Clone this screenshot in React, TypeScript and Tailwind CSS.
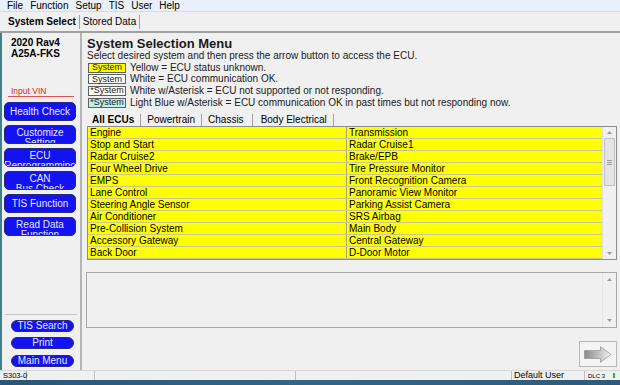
import React from 'react';

const rows: [string, string][] = [
  ['Engine', 'Transmission'],
  ['Stop and Start', 'Radar Cruise1'],
  ['Radar Cruise2', 'Brake/EPB'],
  ['Four Wheel Drive', 'Tire Pressure Monitor'],
  ['EMPS', 'Front Recognition Camera'],
  ['Lane Control', 'Panoramic View Monitor'],
  ['Steering Angle Sensor', 'Parking Assist Camera'],
  ['Air Conditioner', 'SRS Airbag'],
  ['Pre-Collision System', 'Main Body'],
  ['Accessory Gateway', 'Central Gateway'],
  ['Back Door', 'D-Door Motor'],
];

const legend = [
  { label: 'System', bg: 'bg-[#ffff00]', text: 'Yellow = ECU status unknown.' },
  { label: 'System', bg: 'bg-white', text: 'White = ECU communication OK.' },
  { label: '*System', bg: 'bg-white', text: 'White w/Asterisk = ECU not supported or not responding.' },
  {
    label: '*System',
    bg: 'bg-[#b8f2f2]',
    text: 'Light Blue w/Asterisk = ECU communication OK in past times but not responding now.',
  },
];

const sideButtons = [
  ['Health Check'],
  ['Customize', 'Setting'],
  ['ECU', 'Reprogramming'],
  ['CAN', 'Bus Check'],
  ['TIS Function'],
  ['Read Data', 'Function'],
];

const UpArrow = () => (
  <svg width="5" height="3" viewBox="0 0 5 3">
    <path d="M0 3 L2.5 0 L5 3 Z" fill="#9a9a9a" />
  </svg>
);

const DownArrow = () => (
  <svg width="5" height="3" viewBox="0 0 5 3">
    <path d="M0 0 L2.5 3 L5 0 Z" fill="#9a9a9a" />
  </svg>
);

const SideButton: React.FC<{ lines: string[] }> = ({ lines }) => (
  <div
    className={`h-[19px] w-[72px] rounded-[5px] border border-[#2a2a70] bg-[#1212f2] text-[#e6e6ff] text-[10px] leading-[10px] flex flex-col items-center overflow-hidden ${
      lines.length === 1 ? 'justify-center' : 'pt-[2px]'
    }`}
  >
    {lines.map((l) => (
      <span key={l} className="whitespace-nowrap">
        {l}
      </span>
    ))}
  </div>
);

const PillButton: React.FC<{ label: string }> = ({ label }) => (
  <div className="h-[12px] w-[63px] mx-[7px] rounded-full border border-[#2a2a70] bg-[#1212f2] text-[#e6e6ff] text-[10px] leading-[10px] flex items-center justify-center">
    {label}
  </div>
);

export default function App() {
  return (
    <div className="w-[620px] h-[385px] bg-[#f0f0f0] flex flex-col overflow-hidden font-['Liberation_Sans',Arial,sans-serif] text-[10px] text-black">
      {/* menu bar */}
      <div className="h-[12px] bg-[#eaf0f9] border-b border-[#d3dceb] flex items-center gap-[7px] pl-[7px] text-[10px] leading-none">
        <span>File</span>
        <span>Function</span>
        <span>Setup</span>
        <span>TIS</span>
        <span>User</span>
        <span>Help</span>
      </div>

      {/* top tabs */}
      <div className="h-[19px] flex items-center pl-[8px] text-[10px]">
        <span className="font-bold">System Select</span>
        <span className="mx-[3px] h-[14px] w-px bg-[#a0a0a0]" />
        <span>Stored Data</span>
        <span className="ml-[3px] h-[14px] w-px bg-[#a0a0a0]" />
      </div>
      <div className="h-[2px] bg-[#a0a0a0]" />

      {/* body */}
      <div className="flex-1 flex min-h-0">
        <div className="w-[2px] bg-[#3f7f8c]" />

        {/* left panel */}
        <div className="w-[80px] border-r-2 border-[#b4b4b4] flex flex-col px-[2px] pt-[4px]">
          <div className="pl-[7px] font-bold text-[10px] leading-[11px]">
            <div>2020 Rav4</div>
            <div>A25A-FKS</div>
          </div>
          <div className="mt-[27px] h-[11px] mx-[4px] border-b border-[#e05050] text-[#e02020] text-[8.5px] leading-[10px] pl-[3px]">
            Input VIN
          </div>
          <div className="mt-[5px] flex flex-col gap-[4px]">
            {sideButtons.map((b) => (
              <SideButton key={b.join(' ')} lines={b} />
            ))}
          </div>
          <div className="flex-1" />
          <div className="border-t border-[#c4c4c4] mx-[1px]" />
          <div className="mt-[5px]">
            <PillButton label="TIS Search" />
          </div>
          <div className="mt-[5px]">
            <PillButton label="Print" />
          </div>
          <div className="mt-[6px] mb-[3px]">
            <PillButton label="Main Menu" />
          </div>
        </div>

        {/* main area */}
        <div className="flex-1 flex flex-col pl-[5px] pr-[3px] min-w-0">
          <div className="mt-[4px] h-[14px] text-[13px] font-bold leading-[14px] text-[#1a1a1a]">
            System Selection Menu
          </div>
          <div className="h-[10px] leading-[10px] whitespace-nowrap text-[#202020]">
            Select desired system and then press the arrow button to access the ECU.
          </div>
          <div className="mt-[1px] flex flex-col pl-[1px]">
            {legend.map((l, i) => (
              <div key={i} className="h-[11.6px] flex items-center">
                <div
                  className={`w-[38px] h-[10px] border border-[#606060] ${l.bg} flex items-center justify-center leading-none text-[9px] text-[#202020]`}
                >
                  {l.label}
                </div>
                <span className="ml-[4px] whitespace-nowrap leading-none text-[#202020]">{l.text}</span>
              </div>
            ))}
          </div>

          {/* ECU tabs */}
          <div className="mt-[6px] h-[12px] flex items-center pl-[5px] leading-none">
            <span className="font-bold">All ECUs</span>
            <span className="mx-[6px] h-[12px] w-px bg-[#a0a0a0]" />
            <span>Powertrain</span>
            <span className="mx-[6px] h-[12px] w-px bg-[#a0a0a0]" />
            <span>Chassis</span>
            <span className="mx-[8px] h-[12px] w-px bg-[#a0a0a0]" />
            <span>Body Electrical</span>
            <span className="ml-[6px] h-[12px] w-px bg-[#a0a0a0]" />
          </div>

          {/* ECU table */}
          <div className="h-[134px] border border-[#8c8c8c] flex bg-white">
            <div className="flex-1 flex flex-col">
              {rows.map(([a, b]) => (
                <div key={a} className="h-[12px] flex bg-[#ffff00] border-b border-[#c8c890]">
                  <div className="w-[259px] border-r border-[#a8a878] pl-[2px] leading-[11px]">{a}</div>
                  <div className="flex-1 pl-[2px] leading-[11px]">{b}</div>
                </div>
              ))}
            </div>
            <div className="w-[14px] bg-[#f0f0f0] flex flex-col items-center border-l border-[#e0e0e0]">
              <div className="h-[11px] flex items-center">
                <UpArrow />
              </div>
              <div className="w-[11px] h-[48px] bg-[#e4e4e4] border border-[#c2c2c2] flex flex-col items-center justify-center gap-[1px]">
                <div className="w-[5px] h-px bg-[#a0a0a0]" />
                <div className="w-[5px] h-px bg-[#a0a0a0]" />
                <div className="w-[5px] h-px bg-[#a0a0a0]" />
              </div>
              <div className="flex-1" />
              <div className="h-[11px] flex items-center">
                <DownArrow />
              </div>
            </div>
          </div>

          {/* log box */}
          <div className="mt-[12px] ml-[-1px] h-[56px] border border-[#a8a8a8] flex">
            <div className="flex-1" />
            <div className="w-[14px] flex flex-col items-center justify-between py-[5px] border-l border-[#e4e4e4]">
              <UpArrow />
              <DownArrow />
            </div>
          </div>

          {/* arrow button */}
          <div className="mt-[13px] flex justify-end">
            <div className="w-[38px] h-[26px] border border-[#b8b8b8] bg-[#f4f4f4] flex items-center justify-center">
              <svg width="28" height="17" viewBox="0 0 28 17">
                <defs>
                  <linearGradient id="ag" x1="0" y1="0" x2="1" y2="0">
                    <stop offset="0" stopColor="#8a8a8a" />
                    <stop offset="0.6" stopColor="#c8c8c8" />
                    <stop offset="1" stopColor="#f2f2f2" />
                  </linearGradient>
                </defs>
                <path
                  d="M0.5 4.5 H16.5 V0.7 L27 8.5 L16.5 16.3 V12.5 H0.5 Z"
                  fill="url(#ag)"
                  stroke="#9a9a9a"
                  strokeWidth="0.8"
                />
              </svg>
            </div>
          </div>
        </div>
      </div>

      {/* status bar */}
      <div className="h-[10px] flex items-stretch text-[7.5px] leading-[9px] pl-[3px] border-t border-[#d8d8d8]">
        <div className="w-[24px] border-r border-[#a8a8a8] whitespace-nowrap">S303-0</div>
        <div className="w-[68px] border-r border-[#c0c0c0]" />
        <div className="w-[201px] border-r border-[#c0c0c0]" />
        <div className="flex-1 border-r border-[#c0c0c0]" />
        <div className="w-[73px] border-r border-[#c0c0c0] pl-[2px] text-[9px]">Default User</div>
        <div className="w-[35px] flex items-center pl-[3px] gap-[8px]">
          <span className="text-[6px] leading-none">DLC 3</span>
          <span className="w-[2px] h-[5px] bg-[#22c022]" />
        </div>
      </div>
      <div className="h-[5px] bg-gradient-to-r from-[#2a5576] via-[#346684] to-[#2d5a78]" />
    </div>
  );
}
